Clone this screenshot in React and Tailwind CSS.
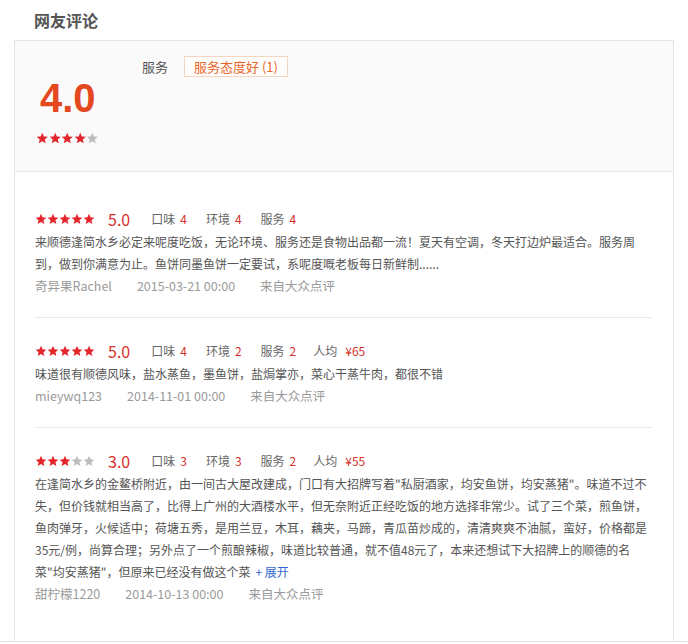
import React from "react";

const reviews = [
  {
    id: 1,
    stars: 5,
    score: "5.0",
    ratings: [
      ["口味", 4],
      ["环境", 4],
      ["服务", 4],
    ],
    price: null,
    content:
      "来顺德逢简水乡必定来呢度吃饭，无论环境、服务还是食物出品都一流！夏天有空调，冬天打边炉最适合。服务周到，做到你满意为止。鱼饼同墨鱼饼一定要试，系呢度嘅老板每日新鲜制......",
    more: false,
    user: "奇异果Rachel",
    date: "2015-03-21 00:00",
    source: "来自大众点评",
  },
  {
    id: 2,
    stars: 5,
    score: "5.0",
    ratings: [
      ["口味", 4],
      ["环境", 2],
      ["服务", 2],
    ],
    price: "¥65",
    content: "味道很有顺德风味，盐水蒸鱼，墨鱼饼，盐焗掌亦，菜心干蒸牛肉，都很不错",
    more: false,
    user: "mieywq123",
    date: "2014-11-01 00:00",
    source: "来自大众点评",
  },
  {
    id: 3,
    stars: 3,
    score: "3.0",
    ratings: [
      ["口味", 3],
      ["环境", 3],
      ["服务", 2],
    ],
    price: "¥55",
    content:
      '在逢简水乡的金鳌桥附近，由一间古大屋改建成，门口有大招牌写着"私厨酒家，均安鱼饼，均安蒸猪"。味道不过不失，但价钱就相当高了，比得上广州的大酒楼水平，但无奈附近正经吃饭的地方选择非常少。试了三个菜，煎鱼饼，鱼肉弹牙，火候适中；荷塘五秀，是用兰豆，木耳，藕夹，马蹄，青瓜苗炒成的，清清爽爽不油腻，蛮好，价格都是35元/例，尚算合理；另外点了一个煎酿辣椒，味道比较普通，就不值48元了，本来还想试下大招牌上的顺德的名菜"均安蒸猪"，但原来已经没有做这个菜',
    more: true,
    user: "甜柠檬1220",
    date: "2014-10-13 00:00",
    source: "来自大众点评",
  },
];

const Star = ({ on, size = 12 }) => (
  <svg width={size} height={size} viewBox="0 0 24 24">
    <path
      d="M12 1.5l3.1 7.2 7.6.6-5.8 5 1.8 7.5L12 17.8l-6.7 4 1.8-7.5-5.8-5 7.6-.6z"
      fill={on ? "#e3262b" : "#bdbdbd"}
    />
  </svg>
);

const Stars = ({ count, size }) => (
  <div className="flex items-center">
    {[1, 2, 3, 4, 5].map((i) => (
      <Star key={i} on={i <= count} size={size} />
    ))}
  </div>
);

const Review = ({ review, last }) => (
  <div
    className={
      last ? "pt-[22px] pb-5" : "pt-[22px] pb-5 border-b border-[#e8e8e8]"
    }
  >
    <div className="flex items-center h-[22px] text-[12px] text-[#666]">
      <Stars count={review.stars} />
      <span className="ml-[13px] mr-[21px] text-[16px] leading-none text-[#d7302c]">
        {review.score}
      </span>
      {review.ratings.map(([label, value]) => (
        <span key={label} className="mr-[19px]">
          {label}
          <span className="ml-[5px] text-[#d7302c]">{value}</span>
        </span>
      ))}
      {review.price && (
        <span className="-ml-[2px]">
          人均
          <span className="ml-[8px] text-[#d7302c]">{review.price}</span>
        </span>
      )}
    </div>
    <p className="mt-[1px] text-[12px] leading-[22px] text-[#555]">
      {review.content}
      {review.more && <span className="ml-[5px] text-[#3366cc]">+ 展开</span>}
    </p>
    <div className="flex h-[22px] items-center text-[12.5px] text-[#9a9a9a]">
      <span className="mr-[25px]">{review.user}</span>
      <span className="mr-[25px]">{review.date}</span>
      <span>{review.source}</span>
    </div>
  </div>
);

export default function App() {
  return (
    <div
      className="w-[688px] h-[644px] overflow-hidden bg-white"
      style={{ fontFamily: '"Noto Sans CJK SC", "Microsoft YaHei", sans-serif' }}
    >
      <div className="h-[642px] border-b border-[#e2e2da]">
        <div className="h-10 flex items-center pl-[34px]">
          <h2 className="text-[16px] font-bold text-[#555]">网友评论</h2>
        </div>
        <div className="ml-[14px] w-[660px] h-[602px] border-l border-r border-t border-[#e3e3e3]">
          <div className="flex h-[131px] bg-[#fafafa] border-b border-[#e5e5e5]">
            <div className="w-[127px] pl-[25px] pt-[37px]">
              <div
                className="text-[40px] leading-[40px] font-bold text-[#e5481f]"
                style={{ fontFamily: '"Liberation Sans", Arial, sans-serif' }}
              >
                4.0
              </div>
              <div className="mt-[14px] -ml-[4px]">
                <Stars count={4} size={12.5} />
              </div>
            </div>
            <div className="pt-[15px] flex items-start">
              <span className="h-[22px] leading-[22px] text-[13px] text-[#555]">
                服务
              </span>
              <span className="ml-[16px] h-[21px] leading-[19px] px-[9px] border border-[#f3d6c2] bg-[#fffdfb] text-[13px] text-[#e8672c]">
                服务态度好 (1)
              </span>
            </div>
          </div>
          <div className="pl-5 pr-[21px] pt-[14px]">
            {reviews.map((r, i) => (
              <Review key={r.id} review={r} last={i === reviews.length - 1} />
            ))}
          </div>
        </div>
      </div>
    </div>
  );
}
